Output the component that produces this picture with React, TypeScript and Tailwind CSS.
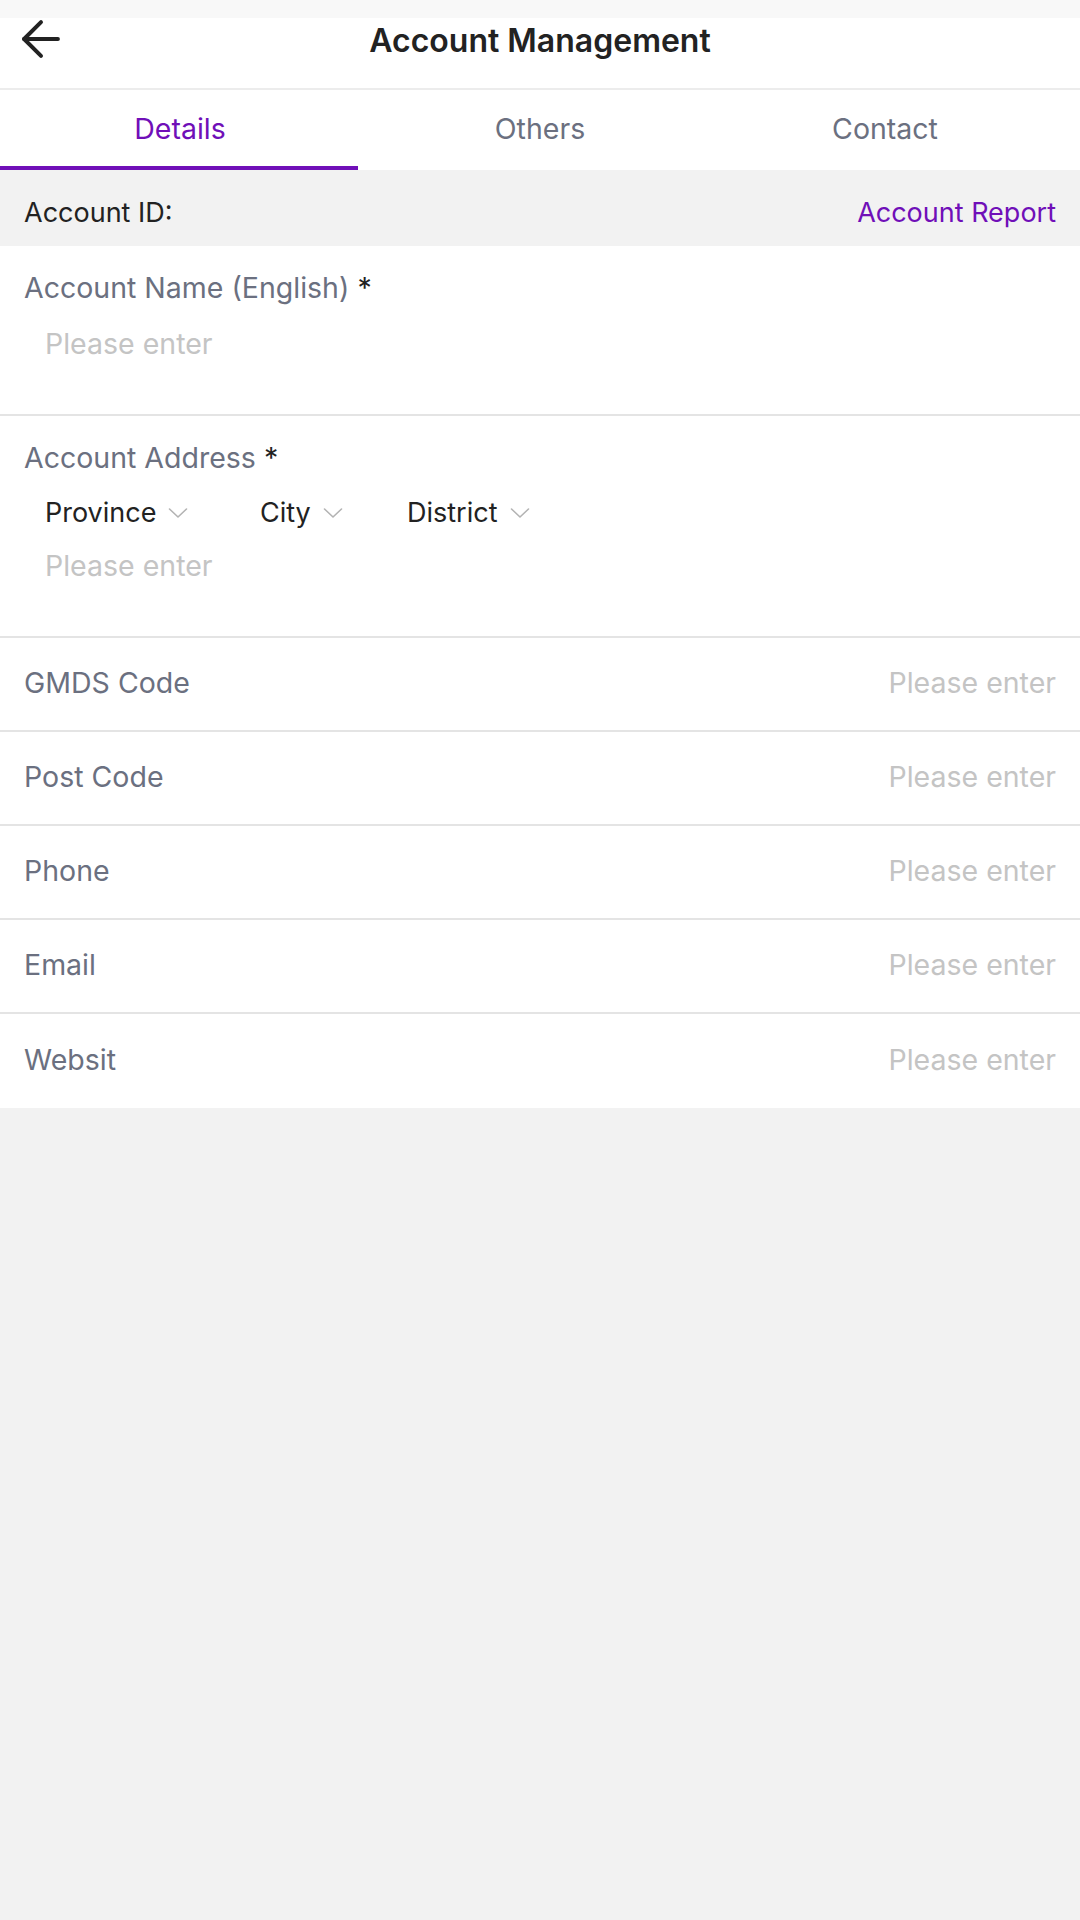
import { ArrowLeft } from "lucide-react";

const font = { fontFamily: "Inter, 'Noto Sans', sans-serif" };

function Chevron() {
  return (
    <svg width="20" height="12" viewBox="0 0 20 12" fill="none" className="ml-[12px]">
      <path d="M1.5 2l8.5 8 8.5-8" stroke="#b3b3b3" strokeWidth="1.6" strokeLinecap="round" strokeLinejoin="round" />
    </svg>
  );
}

const rows = ["GMDS Code", "Post Code", "Phone", "Email", "Websit"];

export default function App() {
  return (
    <div className="min-h-[1920px] w-[1080px] bg-[#f2f2f2]" style={font}>
      {/* Header */}
      <div className="bg-white">
        <div className="h-[18px] bg-[#f8f8f8]" />
        <div className="relative flex h-[72px] items-start justify-center border-b-2 border-[#ececec]">
          <ArrowLeft className="absolute left-[12px] -top-[8px] h-[58px] w-[58px] text-[#222]" strokeWidth={1.65} />
          <h1 className="pt-[3px] text-[32px] leading-[40px] font-semibold text-[#222]">Account Management</h1>
        </div>
      </div>

      {/* Tabs */}
      <div className="flex h-[80px] bg-white">
        {["Details", "Others", "Contact"].map((t, i) => (
          <div
            key={t}
            className={`relative flex w-1/3 items-center justify-center pb-[2px] ${i === 2 ? "pr-[30px]" : ""}`}
          >
            <span className={`text-[28.5px] ${i === 0 ? "text-[#700fb8]" : "text-[#6b7080]"}`}>{t}</span>
            {i === 0 && <div className="absolute bottom-0 left-0 right-[2px] h-[4px] bg-[#700fb8]" />}
          </div>
        ))}
      </div>

      {/* Account ID strip */}
      <div className="flex h-[76px] items-center justify-between px-[24px] pt-[10px] text-[27px]">
        <span className="text-[#222]">Account ID:</span>
        <span className="text-[#700fb8]">Account Report</span>
      </div>

      {/* Form */}
      <div className="bg-white">
        <div className="h-[170px] border-b-2 border-[#e4e4e4] px-[24px] pt-[25px]">
          <div className="text-[28.5px] leading-[34px] text-[#6b7080]">
            Account Name (English) <span className="text-[#222]">*</span>
          </div>
          <div className="mt-[22px] pl-[21px] text-[28.5px] leading-[34px] text-[#c4c4c4]">Please enter</div>
        </div>

        <div className="h-[222px] border-b-2 border-[#e4e4e4] px-[24px] pt-[25px]">
          <div className="text-[28.5px] leading-[34px] text-[#6b7080]">
            Account Address <span className="text-[#222]">*</span>
          </div>
          <div className="mt-[21px] flex items-center pl-[21px] text-[27px] leading-[34px] text-[#222]">
            <div className="flex w-[215px] items-center">
              Province
              <Chevron />
            </div>
            <div className="flex w-[147px] items-center">
              City
              <Chevron />
            </div>
            <div className="flex items-center">
              District
              <Chevron />
            </div>
          </div>
          <div className="mt-[19px] pl-[21px] text-[28.5px] leading-[34px] text-[#c4c4c4]">Please enter</div>
        </div>

        {rows.map((r, i) => (
          <div
            key={r}
            className={`flex h-[94px] items-center justify-between px-[24px] pb-[2px] text-[28.5px] ${
              i < rows.length - 1 ? "border-b-2 border-[#e4e4e4]" : ""
            }`}
          >
            <span className="text-[#6b7080]">{r}</span>
            <span className="text-[#c4c4c4]">Please enter</span>
          </div>
        ))}
      </div>
    </div>
  );
}
